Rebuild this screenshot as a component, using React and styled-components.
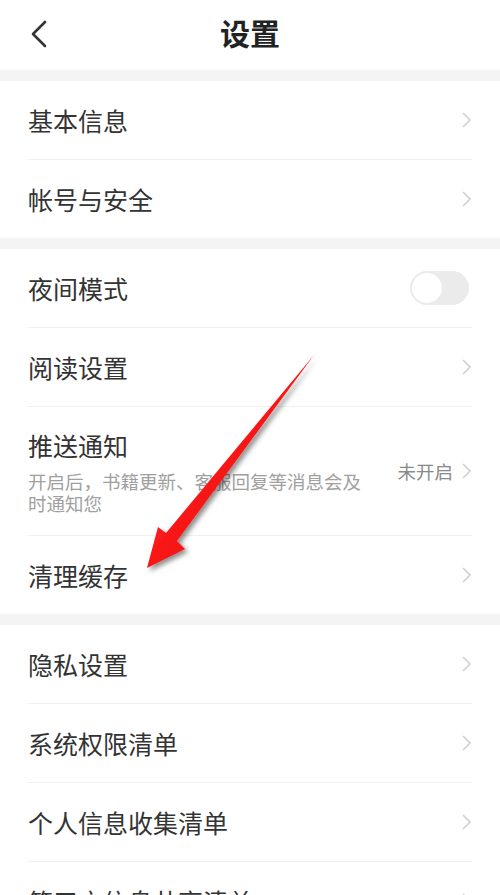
import React from "react";
import styled, { createGlobalStyle } from "styled-components";

const GlobalStyle = createGlobalStyle`
  html, body {
    margin: 0;
    padding: 0;
    background: #f4f4f4;
  }
  body {
    font-family: "Noto Sans CJK SC", "Noto Sans", sans-serif;
    -webkit-font-smoothing: antialiased;
  }
`;

const Page = styled.div`
  position: relative;
  width: 500px;
  background: #f4f4f4;
  display: flex;
  flex-direction: column;
  gap: 11px;
`;

const Header = styled.header`
  height: 70px;
  background: #fff;
  display: flex;
  align-items: center;
  justify-content: center;
  position: relative;
`;

const BackButton = styled.button`
  position: absolute;
  left: 26px;
  top: 18px;
  width: 28px;
  height: 32px;
  border: none;
  background: transparent;
  padding: 0;
  display: flex;
  align-items: center;
  justify-content: center;
`;

const Title = styled.h1`
  margin: 0;
  font-size: 30px;
  font-weight: 700;
  color: #222;
  line-height: 1;
  margin-top: -6px;
`;

const Section = styled.section`
  background: #fff;
  padding: 0 28px;
`;

const Row = styled.div`
  min-height: ${({ $tall }) => ($tall ? "86px" : "78px")};
  padding: ${({ $tall }) => ($tall ? "21px 0" : "0")};
  display: flex;
  align-items: center;
  justify-content: space-between;
  border-bottom: 1px solid #f0f0f0;
  &:last-child {
    border-bottom: none;
  }
`;

const TextBlock = styled.div`
  display: flex;
  flex-direction: column;
  gap: 8px;
  max-width: 345px;
`;

const Label = styled.span`
  font-size: 25px;
  line-height: 34px;
  color: #333;
`;

const Desc = styled.span`
  font-size: 18.5px;
  line-height: 22px;
  color: #a0a0a0;
`;

const Right = styled.div`
  display: flex;
  align-items: center;
  gap: 8px;
`;

const Status = styled.span`
  font-size: 18.5px;
  color: #8a8a8a;
`;

const Switch = styled.div`
  width: 59px;
  height: 34px;
  border-radius: 17px;
  background: #ebebeb;
  margin-right: 3px;
  padding: 2px;
  box-sizing: border-box;
  display: flex;
  align-items: center;
`;

const Knob = styled.div`
  width: 30px;
  height: 30px;
  border-radius: 50%;
  background: #fff;
`;

const Overlay = styled.svg`
  position: absolute;
  left: 0;
  top: 0;
  pointer-events: none;
`;

const Chevron = () => (
  <svg width="11" height="16" viewBox="0 0 11 16">
    <path d="M2 1 L9 8 L2 15" fill="none" stroke="#cfcfcf" strokeWidth="1.6" />
  </svg>
);

const Item = ({ label, desc, status, toggle }) => (
  <Row $tall={!!desc}>
    <TextBlock>
      <Label>{label}</Label>
      {desc && <Desc>{desc}</Desc>}
    </TextBlock>
    {toggle ? (
      <Switch>
        <Knob />
      </Switch>
    ) : (
      <Right>
        {status && <Status>{status}</Status>}
        <Chevron />
      </Right>
    )}
  </Row>
);

const groups = [
  [{ label: "基本信息" }, { label: "帐号与安全" }],
  [
    { label: "夜间模式", toggle: true },
    { label: "阅读设置" },
    {
      label: "推送通知",
      desc: "开启后，书籍更新、客服回复等消息会及时通知您",
      status: "未开启",
    },
    { label: "清理缓存" },
  ],
  [
    { label: "隐私设置" },
    { label: "系统权限清单" },
    { label: "个人信息收集清单" },
    { label: "第三方信息共享清单" },
  ],
];

export default function App() {
  return (
    <Page>
      <GlobalStyle />
      <Header>
        <BackButton>
          <svg width="20" height="28" viewBox="0 0 20 28">
            <path
              d="M15 2 L3 14 L15 26"
              fill="none"
              stroke="#333"
              strokeWidth="2.6"
              strokeLinecap="round"
              strokeLinejoin="round"
            />
          </svg>
        </BackButton>
        <Title>设置</Title>
      </Header>
      {groups.map((items, i) => (
        <Section key={i}>
          {items.map((it) => (
            <Item key={it.label} {...it} />
          ))}
        </Section>
      ))}
      <Overlay width="500" height="895" viewBox="0 0 500 895">
        <defs>
          <filter id="shade" x="-20%" y="-20%" width="140%" height="140%">
            <feDropShadow dx="3" dy="3" stdDeviation="2.5" floodColor="#000" floodOpacity="0.45" />
          </filter>
          <linearGradient id="red" x1="0" y1="0" x2="1" y2="1">
            <stop offset="0" stopColor="#ff3030" />
            <stop offset="1" stopColor="#f00000" />
          </linearGradient>
        </defs>
        <polygon
          points="314,355 177,541 185,549 147,568 158,527 166,533"
          fill="url(#red)"
          filter="url(#shade)"
        />
      </Overlay>
    </Page>
  );
}
